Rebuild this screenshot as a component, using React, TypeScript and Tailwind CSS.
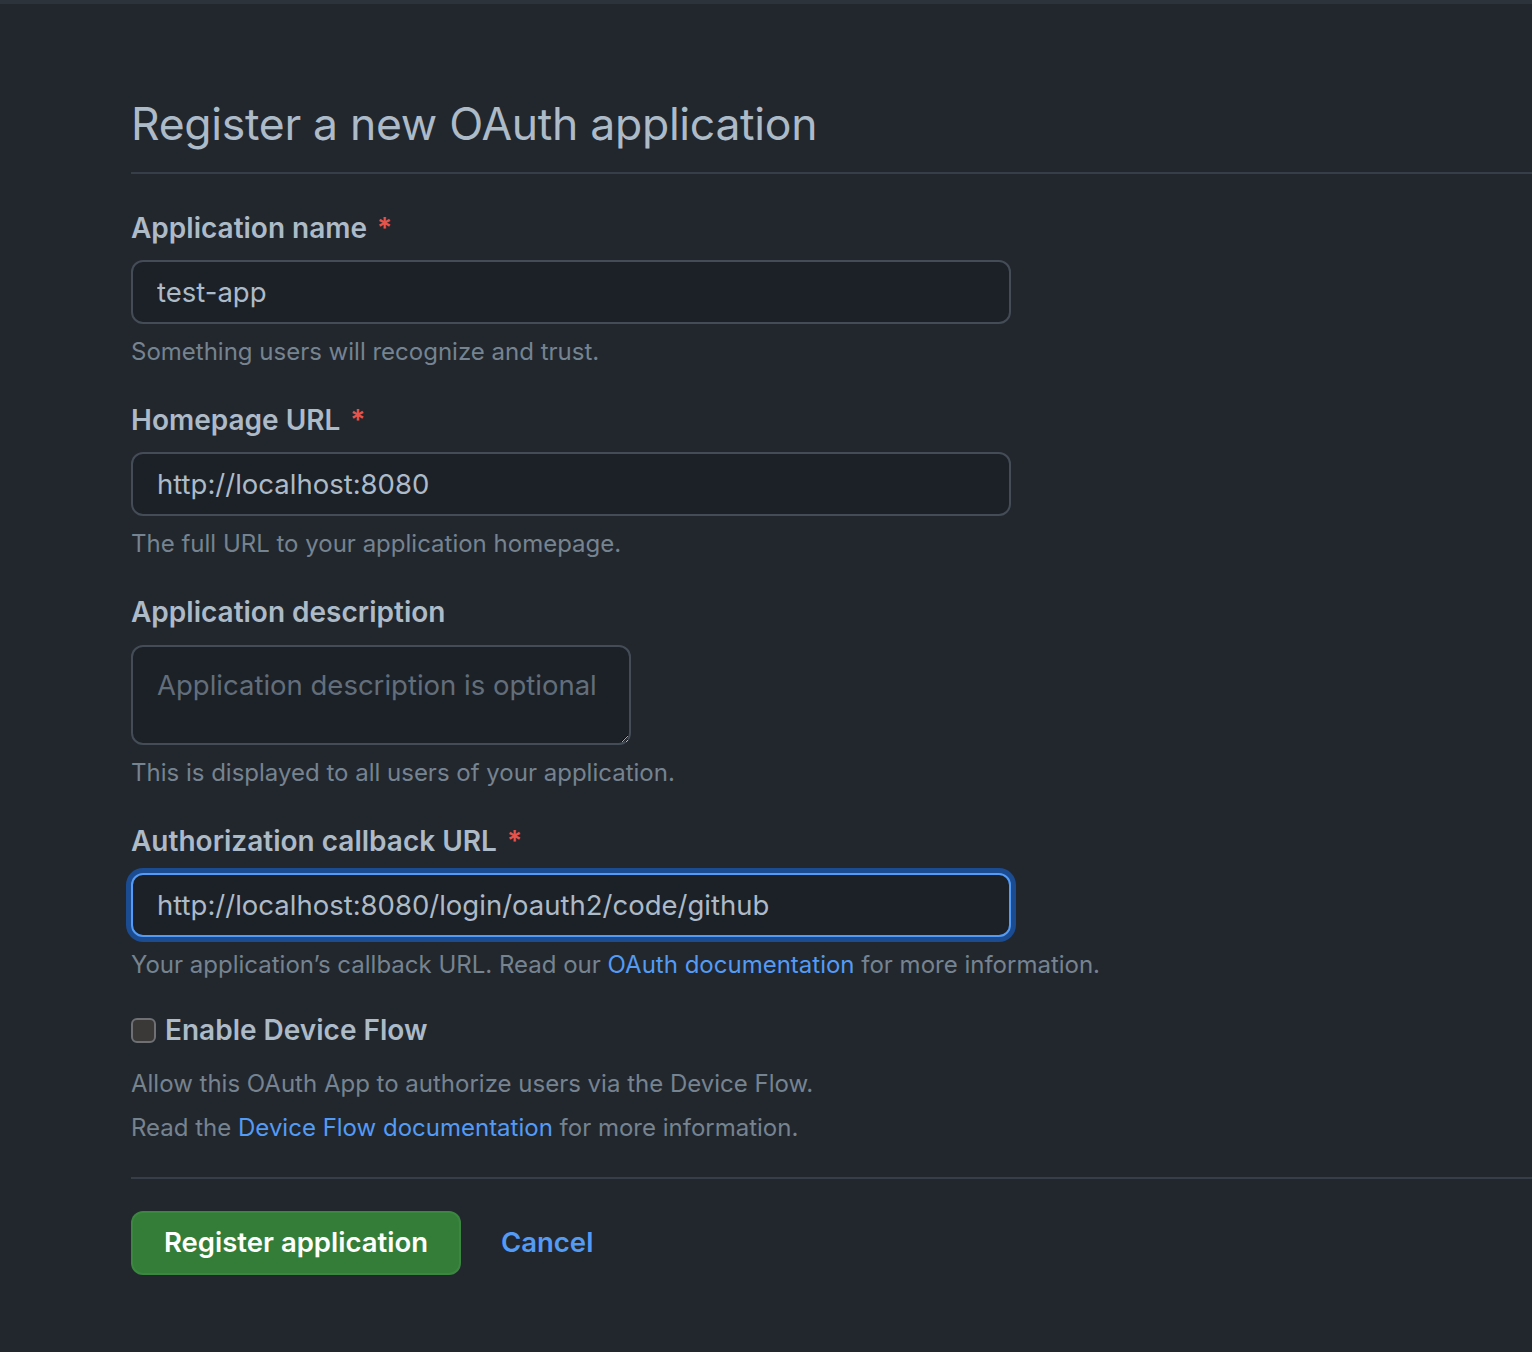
import React from "react";

const font = { fontFamily: "Inter, 'Noto Sans', sans-serif" };

function Label({ text, required }: { text: string; required?: boolean }) {
  return <div className="flex items-baseline text-[28px] font-semibold leading-[40px] text-[#adbac7]">
    <span>{text}</span>
    {required && <span className="ml-[10px] text-[#e5534b]">*</span>}
  </div>;
}

function Help({ children }: { children: React.ReactNode }) {
  return <p className="mt-[12px] text-[24px] leading-[32px] text-[#768390]">{children}</p>;
}

function Field({ label, value, help, focused }: { label: string; value: string; help: React.ReactNode; focused?: boolean }) {
  return <div className="mb-[32px]">
    <Label text={label} required />
    <input
      readOnly
      value={value}
      className={focused
        ? "mt-[12px] block h-[64px] w-[880px] rounded-[12px] border-2 border-[#539bf5] bg-[#1c2128] px-[24px] text-[27.5px] text-[#adbac7] shadow-[0_0_0_5px_#1b4b91] outline-none"
        : "mt-[12px] block h-[64px] w-[880px] rounded-[12px] border-2 border-[#444c56] bg-[#1c2128] px-[24px] text-[27.5px] text-[#adbac7] outline-none"}
      style={font}
    />
    <Help>{help}</Help>
  </div>;
}

export default function App() {
  return <div className="min-h-[1352px] bg-[#22272e]" style={font}>
    <div className="h-[4px] bg-[#2d333b]" />
    <div className="pl-[131px] pt-[93px]">
      <h1 className="pb-[21px] text-[44.5px] font-normal leading-[54px] tracking-[-0.3px] text-[#adbac7]">Register a new OAuth application</h1>
      <div className="h-[2px] bg-[#373e47]" />
      <div className="pt-[34px]">
        <Field label="Application name" value="test-app" help="Something users will recognize and trust." />
        <Field label="Homepage URL" value="http://localhost:8080" help="The full URL to your application homepage." />
        <div className="mb-[32px]">
          <Label text="Application description" />
          <textarea
            placeholder="Application description is optional"
            className="mt-[13px] block h-[100px] w-[500px] rounded-[12px] border-2 border-[#444c56] bg-[#1c2128] px-[24px] py-[18px] text-[27.5px] leading-[40px] text-[#adbac7] outline-none placeholder:text-[#636e7b]"
            style={font}
          />
          <Help>This is displayed to all users of your application.</Help>
        </div>
        <Field
          label="Authorization callback URL"
          value="http://localhost:8080/login/oauth2/code/github"
          focused
          help={<>Your application’s callback URL. Read our <a className="text-[#539bf5]">OAuth documentation</a> for more information.</>}
        />
        <div className="-mt-[3px]">
          <label className="flex items-center gap-[9px]">
            <span className="block h-[25px] w-[25px] rounded-[6px] border-2 border-[#6e7074] bg-[#3a3937]" />
            <span className="text-[28px] font-semibold leading-[40px] text-[#adbac7]">Enable Device Flow</span>
          </label>
          <p className="mt-[18px] text-[24px] leading-[32px] text-[#768390]">Allow this OAuth App to authorize users via the Device Flow.</p>
          <p className="mt-[12px] text-[24px] leading-[32px] text-[#768390]">Read the <a className="text-[#539bf5]">Device Flow documentation</a> for more information.</p>
        </div>
        <div className="mt-[33px] h-[2px] bg-[#373e47]" />
        <div className="flex items-center gap-[40px] pt-[32px]">
          <button className="h-[64px] rounded-[12px] border-2 border-[#46954a66] bg-[#347d39] px-[31px] text-[27.5px] font-semibold text-white" style={font}>Register application</button>
          <a className="text-[27.5px] font-semibold text-[#539bf5]">Cancel</a>
        </div>
      </div>
    </div>
  </div>;
}
